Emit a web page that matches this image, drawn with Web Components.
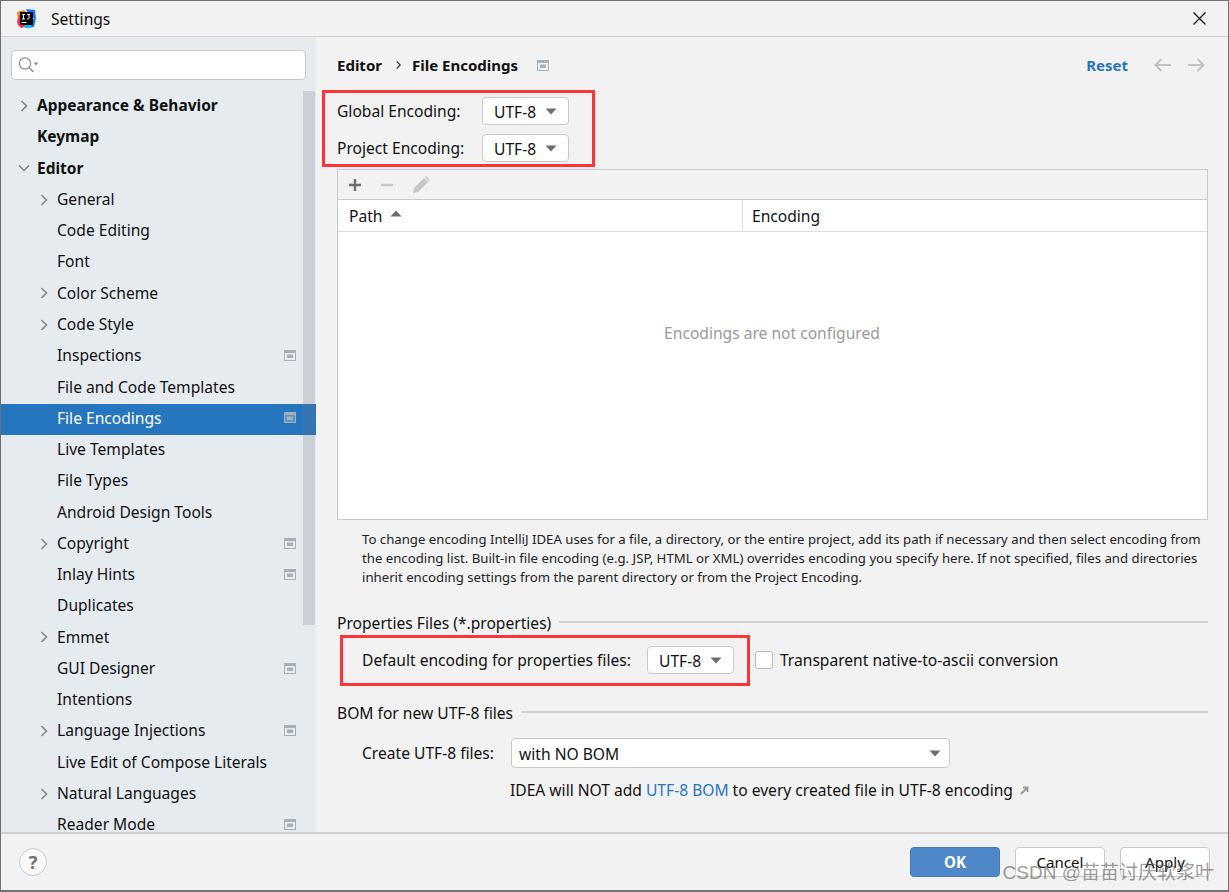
<!DOCTYPE html>
<html>
<head>
<meta charset="utf-8">
<title>Settings</title>
<style>
    html, body { margin: 0; padding: 0; background: #f2f2f2; }
    body { font-family: "Noto Sans", "Open Sans", "Noto Sans CJK SC", sans-serif; font-size: 15.6px; color: #111; }
</style>
</head>
<body>
<settings-window></settings-window>

<script>
// small svg icons shared by the elements
const icons = {
    chevronRight: '<svg width="16" height="16" viewBox="0 0 16 16"><path d="M5.5 3 L10.5 8 L5.5 13" fill="none" stroke="#7f8589" stroke-width="1.5"/></svg>',
    chevronDown: '<svg width="16" height="16" viewBox="0 0 16 16"><path d="M3 5.5 L8 10.5 L13 5.5" fill="none" stroke="#7f8589" stroke-width="1.5"/></svg>',
    project: (fill) => `<svg width="12" height="11" viewBox="0 0 12 11"><rect x=".5" y=".5" width="11" height="10" fill="${fill}" stroke="#a5b0ba"/><rect x="1" y="1" width="10" height="2" fill="#a5b0ba"/><rect x="3" y="4.5" width="6" height="3.5" fill="#a5b0ba"/></svg>`,
    caret: '<svg width="12" height="7" viewBox="0 0 12 7"><path d="M0.5 0.5 H11.5 L6 6.5 Z" fill="#6e6e6e"/></svg>'
};

class ComboBox extends HTMLElement {
    constructor() {
        super();
        this.attachShadow({ mode: 'open' });
        this.shadowRoot.innerHTML = `
            <style>
                :host {
                    display: inline-flex;
                    align-items: center;
                    justify-content: space-between;
                    box-sizing: border-box;
                    width: 87px;
                    height: 28px;
                    padding: 0 11px 0 11px;
                    background: #fff;
                    border: 1px solid #c9c9c9;
                    border-radius: 4px;
                    color: #111;
                }
                svg { display: block; }
                span { position: relative; top: 1px; }
            </style>
            <span><slot></slot></span>${icons.caret}
        `;
    }
}

class TreeRow extends HTMLElement {
    constructor() {
        super();
        this.attachShadow({ mode: 'open' });
        const arrow = this.getAttribute('arrow');
        const selected = this.hasAttribute('selected');
        const badge = this.hasAttribute('badge');
        const arrowIcon = arrow === 'right' ? icons.chevronRight : arrow === 'down' ? icons.chevronDown : '';
        this.shadowRoot.innerHTML = `
            <style>
                :host {
                    display: flex;
                    align-items: center;
                    flex: none;
                    box-sizing: border-box;
                    height: 31.27px;
                    padding: 0 0 3.6px 56px;
                    position: relative;
                    white-space: nowrap;
                    color: #111;
                }
                :host([top]) { padding-left: 36px; font-weight: 700; font-size: 15.5px; }
                :host([selected]) { background: #2675bf; color: #fff; }
                .arrow { position: absolute; left: 35px; top: 5.5px; width: 16px; height: 16px; }
                :host([top]) .arrow { left: 15px; }
                .badge { position: absolute; left: 283px; top: 8.5px; line-height: 0; }
            </style>
            <span class="arrow">${arrowIcon}</span>
            <slot></slot>
            ${badge ? `<span class="badge">${icons.project(selected ? '#5f93c8' : '#e6ebf0')}</span>` : ''}
        `;
    }
}

class SideTree extends HTMLElement {
    constructor() {
        super();
        this.attachShadow({ mode: 'open' });
        const rows = [
            ['Appearance &amp; Behavior', 'arrow="right" top'],
            ['Keymap', 'top'],
            ['Editor', 'arrow="down" top'],
            ['General', 'arrow="right"'],
            ['Code Editing', ''],
            ['Font', ''],
            ['Color Scheme', 'arrow="right"'],
            ['Code Style', 'arrow="right"'],
            ['Inspections', 'badge'],
            ['File and Code Templates', ''],
            ['File Encodings', 'badge selected'],
            ['Live Templates', ''],
            ['File Types', ''],
            ['Android Design Tools', ''],
            ['Copyright', 'arrow="right" badge'],
            ['Inlay Hints', 'badge'],
            ['Duplicates', ''],
            ['Emmet', 'arrow="right"'],
            ['GUI Designer', 'badge'],
            ['Intentions', ''],
            ['Language Injections', 'arrow="right" badge'],
            ['Live Edit of Compose Literals', ''],
            ['Natural Languages', 'arrow="right"'],
            ['Reader Mode', 'badge']
        ];
        this.shadowRoot.innerHTML = `
            <style>
                :host {
                    display: flex;
                    flex-direction: column;
                    flex: none;
                    box-sizing: border-box;
                    width: 315px;
                    height: 795px;
                    background: #e6ebf0;
                    overflow: hidden;
                    position: relative;
                }
                .search {
                    flex: none;
                    box-sizing: border-box;
                    height: 30px;
                    margin: 13px 10px 11.3px 10px;
                    background: #fff;
                    border: 1px solid #c9c9c9;
                    border-radius: 4px;
                    display: flex;
                    align-items: center;
                    padding-left: 6px;
                }
                .thumb {
                    position: absolute;
                    left: 302px;
                    top: 54px;
                    width: 11.5px;
                    height: 534px;
                    background: rgba(110, 115, 125, .22);
                    z-index: 2;
                }
            </style>
            <div class="search">
                <svg width="22" height="18" viewBox="0 0 22 18">
                    <circle cx="7" cy="7.5" r="5.6" fill="none" stroke="#8c9094" stroke-width="1.2"/>
                    <path d="M11 11.5 L15.5 16" stroke="#8c9094" stroke-width="1.6"/>
                    <path d="M15.5 6.5 H20.5 L18 9.5 Z" fill="#8c9094"/>
                </svg>
            </div>
            ${rows.map(r => `<tree-row ${r[1]}>${r[0]}</tree-row>`).join('')}
            <div class="thumb"></div>
        `;
    }
}

class GroupTitle extends HTMLElement {
    constructor() {
        super();
        this.attachShadow({ mode: 'open' });
        this.shadowRoot.innerHTML = `
            <style>
                :host { display: flex; align-items: center; gap: 8px; height: 20px; white-space: nowrap; }
                i { flex: 1; height: 2px; background: #d2d2d2; position: relative; top: -1px; }
            </style>
            <slot></slot><i></i>
        `;
    }
}

class EncodingTable extends HTMLElement {
    constructor() {
        super();
        this.attachShadow({ mode: 'open' });
        this.shadowRoot.innerHTML = `
            <style>
                :host {
                    display: flex;
                    flex-direction: column;
                    box-sizing: border-box;
                    height: 351px;
                    border: 1px solid #c9c9c9;
                    background: #fff;
                }
                .tools {
                    flex: none;
                    height: 30px;
                    background: #f2f2f2;
                    border-bottom: 1px solid #c9c9c9;
                    display: flex;
                    align-items: center;
                    gap: 12px;
                    padding-left: 7px;
                    box-sizing: border-box;
                }
                svg { display: block; }
                .tools svg:last-child { margin-left: 2px; }
                .head {
                    flex: none;
                    height: 32px;
                    box-sizing: border-box;
                    border-bottom: 1px solid #dcdcdc;
                    display: flex;
                    align-items: stretch;
                }
                .col { display: flex; align-items: center; gap: 8px; padding-left: 11px; }
                .path { width: 404px; box-sizing: content-box; padding-left: 0; border-right: 1px solid #dcdcdc; }
                .path span { margin-left: 11px; }
                .enc { padding-left: 9px; }
                .empty {
                    flex: 1;
                    display: flex;
                    align-items: center;
                    justify-content: center;
                    color: #999;
                    padding: 0 1px 86px 0;
                    box-sizing: border-box;
                }
            </style>
            <div class="tools">
                <svg width="20" height="20" viewBox="0 0 20 20"><path d="M10 4 V16 M4 10 H16" stroke="#6e6e6e" stroke-width="2.4"/></svg>
                <svg width="20" height="20" viewBox="0 0 20 20"><path d="M4 10 H16" stroke="#c6c6c6" stroke-width="2.4"/></svg>
                <svg width="20" height="20" viewBox="0 0 20 20"><path d="M2 18 L3 13 L13 3 L17 7 L7 17 Z" fill="#c6c6c6"/><path d="M13.8 2.2 L15 1 L19 5 L17.8 6.2 Z" fill="#c6c6c6"/></svg>
            </div>
            <div class="head">
                <div class="col path"><span>Path</span> <svg width="12" height="7" viewBox="0 0 12 7" style="margin-top:-4px"><path d="M.5 6.5 H11.5 L6 .5 Z" fill="#6e6e6e"/></svg></div>
                <div class="col enc">Encoding</div>
            </div>
            <div class="empty">Encodings are not configured</div>
        `;
    }
}

class DialogFooter extends HTMLElement {
    constructor() {
        super();
        this.attachShadow({ mode: 'open' });
        this.shadowRoot.innerHTML = `
            <style>
                :host {
                    display: flex;
                    align-items: center;
                    flex: 1;
                    box-sizing: border-box;
                    border-top: 2px solid #d0d0d0;
                    padding: 0 18px 0 18px;
                    background: #f2f2f2;
                }
                .help {
                    width: 28px;
                    height: 28px;
                    box-sizing: border-box;
                    border: 1px solid #c9c9c9;
                    border-radius: 50%;
                    background: #f9f9f9;
                    display: flex;
                    align-items: center;
                    justify-content: center;
                    color: #6e6e6e;
                    font-weight: 700;
                    font-size: 18px;
                }
                .btns { margin-left: auto; display: flex; gap: 15px; }
                button {
                    width: 90px;
                    height: 30px;
                    box-sizing: border-box;
                    padding: 0;
                    border: 1px solid #c9c9c9;
                    border-radius: 4px;
                    background: #fff;
                    font: inherit;
                    font-size: 15.1px;
                    color: #111;
                }
                button.ok { background: #4e88c8; border-color: #3f7cbe; color: #fff; font-weight: 700; }
            </style>
            <div class="help">?</div>
            <div class="btns">
                <button class="ok">OK</button>
                <button>Cancel</button>
                <button>Apply</button>
            </div>
        `;
    }
}

class SettingsWindow extends HTMLElement {
    constructor() {
        super();
        this.attachShadow({ mode: 'open' });
        this.shadowRoot.innerHTML = `
            <style>
                :host {
                    display: flex;
                    flex-direction: column;
                    box-sizing: border-box;
                    width: 1229px;
                    height: 892px;
                    border: 1px solid #707070;
                    border-bottom-width: 2px;
                    position: relative;
                    background: #f2f2f2;
                    overflow: hidden;
                }
                .title {
                    flex: none;
                    height: 36px;
                    box-sizing: border-box;
                    border-bottom: 1px solid #cfcfcf;
                    display: flex;
                    align-items: center;
                    padding: 0 22px 0 15px;
                    gap: 15px;
                }
                .title .close { margin-left: auto; display: block; }
                .logo { display: block; }
                .body { flex: none; display: flex; height: 795px; }
                .main {
                    flex: 1;
                    min-width: 0;
                    box-sizing: border-box;
                    padding: 0 20px 0 21px;
                    display: flex;
                    flex-direction: column;
                    white-space: nowrap;
                }
                .crumbs {
                    flex: none;
                    display: flex;
                    align-items: center;
                    height: 28px;
                    margin-top: 14px;
                    font-weight: 700;
                    font-size: 15px;
                }
                .crumbs .sep { margin: 0 11px 0 14px; display: block; }
                .crumbs .pin { margin-left: 19px; display: block; }
                .crumbs .reset { margin-left: auto; color: #2675bf; }
                .crumbs .nav { display: block; margin-left: 26px; }
                .crumbs .nav + .nav { margin-left: 17px; margin-right: 3px; }
                .enc {
                    display: grid;
                    grid-template-columns: 145px 87px;
                    row-gap: 8px;
                    align-items: center;
                    margin-top: 17px;
                    justify-items: start;
                }
                .enc combo-box { margin-top: 1px; }
                encoding-table { margin-top: 7px; }
                .note {
                    margin: 9.5px 0 0 25px;
                    font-size: 13.2px;
                    line-height: 19px;
                    color: #222;
                    white-space: normal;
                    width: 845px;
                }
                group-title.first { margin-top: 26.5px; }
                .props {
                    display: flex;
                    align-items: center;
                    margin: 13px 0 0 25px;
                }
                .props combo-box { margin-left: 16px; }
                .check {
                    width: 18px;
                    height: 18px;
                    box-sizing: border-box;
                    background: #fff;
                    border: 1px solid #b8b8b8;
                    border-radius: 3px;
                    margin: 0 7px 0 21px;
                }
                group-title.second { margin-top: 29px; }
                .bom { display: flex; align-items: center; margin: 15px 0 0 25px; }
                .bom combo-box { margin-left: 17px; width: 439px; height: 30px; padding-left: 7px; padding-right: 8px; }
                .hint { margin: 11px 0 0 173px; display: flex; align-items: center; }
                .hint a { color: #2675bf; text-decoration: none; margin: 0 4px; }
                .hint svg { margin-left: 7px; display: block; }
                .mark {
                    position: absolute;
                    border: 3px solid #fb3438;
                    box-sizing: border-box;
                    pointer-events: none;
                }
                .mark.a { left: 321px; top: 89px; width: 273px; height: 77px; }
                .mark.b { left: 339px; top: 634px; width: 410px; height: 51px; }
                .watermark {
                    position: absolute;
                    right: 14px;
                    bottom: 5px;
                    font-family: "Liberation Sans", "Noto Sans CJK SC", sans-serif;
                    font-size: 19px;
                    line-height: 24px;
                    color: rgba(90, 90, 90, .62);
                    white-space: nowrap;
                }
            </style>
            <div class="title">
                <svg class="logo" width="20" height="20" viewBox="0 0 20 20">
                    <path d="M1 3 L8 1 L12 5 L4 16 L2 13 Z" fill="#fc801d"/>
                    <path d="M1 12 L5 4 L12 17 L5 19 L2 16 Z" fill="#fe2857"/>
                    <path d="M10 0 L19 1 L20 10 L14 8 Z" fill="#007efe"/>
                    <path d="M12 12 L20 9 L18 18 L11 19 Z" fill="#087cfa"/>
                    <path d="M8 17 L16 12 L15 19 L9 19 Z" fill="#07c3f2"/>
                    <rect x="4" y="3" width="13" height="13" fill="#000"/>
                    <rect x="5.5" y="13" width="5" height="1" fill="#fff"/>
                    <path d="M6 5.5 H9 M7.5 5.5 V10 M6 10 H9 M11 5.5 H14 M13 5.5 V9.5 Q13 10 11 10" fill="none" stroke="#fff" stroke-width="1"/>
                </svg>
                <span>Settings</span>
                <svg class="close" width="13" height="13" viewBox="0 0 13 13"><path d="M.5 .5 L12.5 12.5 M12.5 .5 L.5 12.5" stroke="#111" stroke-width="1.2"/></svg>
            </div>
            <div class="body">
                <side-tree></side-tree>
                <div class="main">
                    <div class="crumbs">
                        <span>Editor</span>
                        <svg class="sep" width="5" height="8" viewBox="0 0 5 8"><path d="M.7 .5 L4.2 4 L.7 7.5" fill="none" stroke="#333" stroke-width="1.2"/></svg>
                        <span>File Encodings</span>
                        <svg class="pin" width="12" height="11" viewBox="0 0 12 11"><rect x=".5" y=".5" width="11" height="10" fill="#f2f2f2" stroke="#a8b2bb"/><rect x="1" y="1" width="10" height="2" fill="#a8b2bb"/><rect x="3" y="4.5" width="6" height="3.5" fill="#a8b2bb"/></svg>
                        <span class="reset">Reset</span>
                        <svg class="nav" width="17" height="14" viewBox="0 0 17 14"><path d="M17 7 H1.5 M7.5 1 L1.5 7 L7.5 13" fill="none" stroke="#c2c2c2" stroke-width="2"/></svg>
                        <svg class="nav" width="17" height="14" viewBox="0 0 17 14"><path d="M0 7 H15.5 M9.5 1 L15.5 7 L9.5 13" fill="none" stroke="#c2c2c2" stroke-width="2"/></svg>
                    </div>
                    <div class="enc">
                        <span>Global Encoding:</span><combo-box>UTF-8</combo-box>
                        <span>Project Encoding:</span><combo-box>UTF-8</combo-box>
                    </div>
                    <encoding-table></encoding-table>
                    <div class="note">To change encoding IntelliJ IDEA uses for a file, a directory, or the entire project, add its path if necessary and then select encoding from the encoding list. Built-in file encoding (e.g. JSP, HTML or XML) overrides encoding you specify here. If not specified, files and directories inherit encoding settings from the parent directory or from the Project Encoding.</div>
                    <group-title class="first">Properties Files (*.properties)</group-title>
                    <div class="props">
                        <span>Default encoding for properties files:</span>
                        <combo-box>UTF-8</combo-box>
                        <span class="check"></span>
                        <span>Transparent native-to-ascii conversion</span>
                    </div>
                    <group-title class="second">BOM for new UTF-8 files</group-title>
                    <div class="bom">
                        <span>Create UTF-8 files:</span>
                        <combo-box>with NO BOM</combo-box>
                    </div>
                    <div class="hint">IDEA will NOT add <a>UTF-8 BOM</a> to every created file in UTF-8 encoding
                        <svg width="9" height="9" viewBox="0 0 9 9"><path d="M1 8 L7 2 M3 1.5 H7.5 V6" fill="none" stroke="#9a9a9a" stroke-width="1.8"/></svg>
                    </div>
                </div>
            </div>
            <dialog-footer></dialog-footer>
            <div class="mark a"></div>
            <div class="mark b"></div>
            <div class="watermark">CSDN @苗苗讨厌软浆叶</div>
        `;
    }
}

// children first so their shadow content is ready when the window parses them
customElements.define('combo-box', ComboBox);
customElements.define('tree-row', TreeRow);
customElements.define('side-tree', SideTree);
customElements.define('group-title', GroupTitle);
customElements.define('encoding-table', EncodingTable);
customElements.define('dialog-footer', DialogFooter);
customElements.define('settings-window', SettingsWindow);
</script>
</body>
</html>
